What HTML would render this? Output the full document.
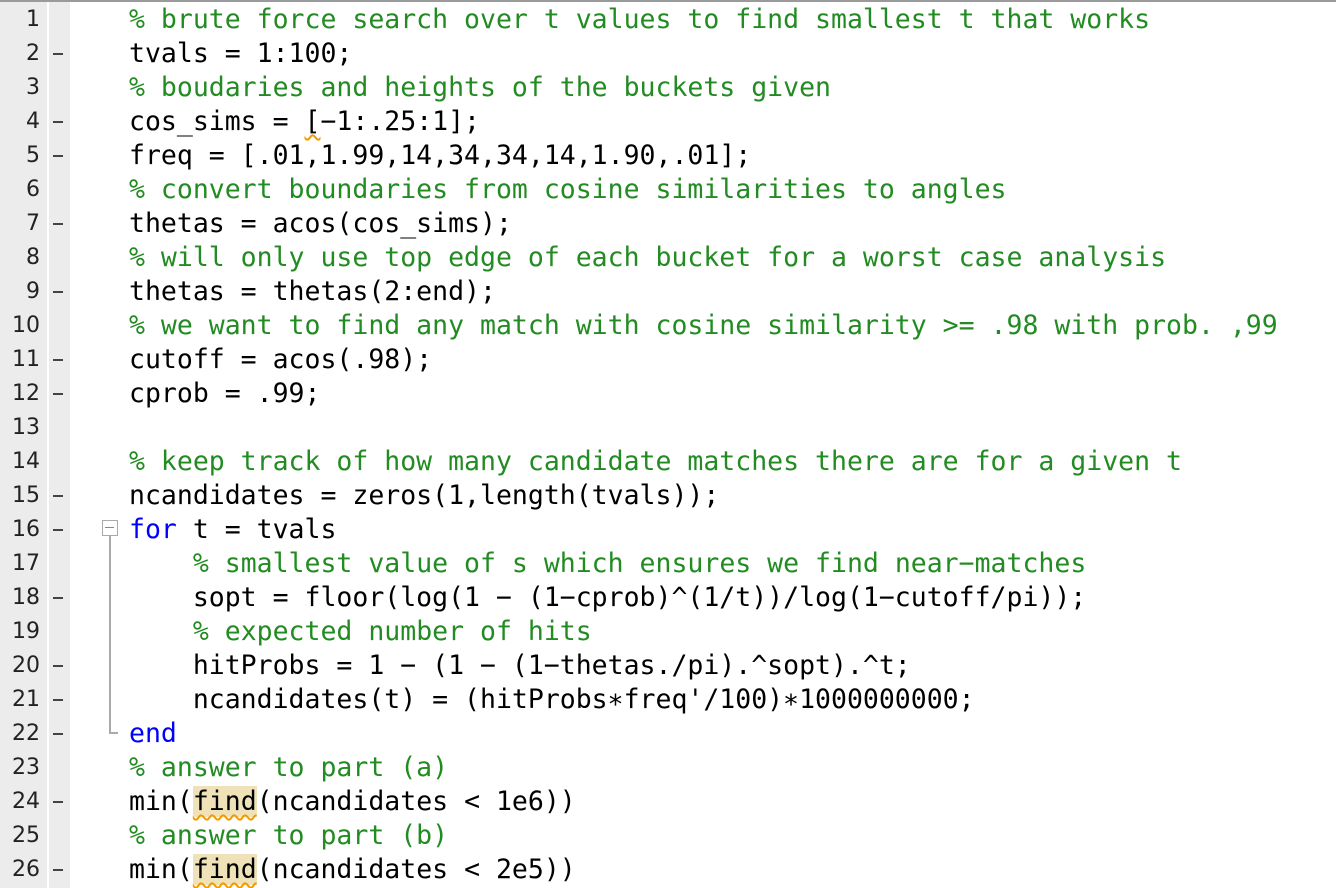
<!DOCTYPE html>
<html><head><style>
body{margin:0;width:1336px;height:888px;overflow:hidden;background:#fff;font-family:"DejaVu Sans Mono","Liberation Mono",monospace;}
.top{position:absolute;left:0;top:0;width:1336px;height:2px;background:#9a9a9a;}
.g1{position:absolute;left:0;top:2px;width:47px;height:886px;background:#ececec;}
.g2{position:absolute;left:49px;top:2px;width:21px;height:886px;background:#ececec;}
.ln{position:absolute;left:0;width:40px;text-align:right;font-size:22px;color:#222;height:34px;line-height:34px;font-family:"DejaVu Sans","Liberation Sans",sans-serif;}
.d{position:absolute;left:53px;width:10px;height:2px;background:#444;}
.c{position:absolute;left:129px;font-size:26.5px;line-height:34px;height:34px;white-space:pre;color:#000;}
.cm{color:#228b22}.kw{color:#0000ff}
.hl{background:#efe2b8;text-decoration:underline wavy #f29a00;text-decoration-thickness:2px;text-underline-offset:4px;}
.sq{text-decoration:underline wavy #f29a00;text-underline-offset:4px;text-decoration-thickness:2px;}
</style></head><body>
<div class="top"></div><div class="g1"></div><div class="g2"></div>
<div style="position:absolute;left:102px;top:520px;width:14px;height:14px;border:1px solid #aaa;background:#fff"></div>
<div style="position:absolute;left:105px;top:527px;width:9px;height:1px;background:#888"></div>
<div style="position:absolute;left:109px;top:536px;width:2px;height:198px;background:#aaa"></div>
<div style="position:absolute;left:109px;top:732px;width:9px;height:2px;background:#aaa"></div>
<div id="g"></div>
<script>
var L=[
['<span class="cm">% brute force search over t values to find smallest t that works</span>',0],
['tvals = 1:100;',1],
['<span class="cm">% boudaries and heights of the buckets given</span>',0],
['cos_sims = <span class="sq">[</span>−1:.25:1];',1],
['freq = [.01,1.99,14,34,34,14,1.90,.01];',1],
['<span class="cm">% convert boundaries from cosine similarities to angles</span>',0],
['thetas = acos(cos_sims);',1],
['<span class="cm">% will only use top edge of each bucket for a worst case analysis</span>',0],
['thetas = thetas(2:end);',1],
['<span class="cm">% we want to find any match with cosine similarity &gt;= .98 with prob. ,99</span>',0],
['cutoff = acos(.98);',1],
['cprob = .99;',1],
['',0],
['<span class="cm">% keep track of how many candidate matches there are for a given t</span>',0],
['ncandidates = zeros(1,length(tvals));',1],
['<span class="kw">for</span> t = tvals',1],
['    <span class="cm">% smallest value of s which ensures we find near−matches</span>',0],
['    sopt = floor(log(1 − (1−cprob)^(1/t))/log(1−cutoff/pi));',1],
['    <span class="cm">% expected number of hits</span>',0],
['    hitProbs = 1 − (1 − (1−thetas./pi).^sopt).^t;',1],
['    ncandidates(t) = (hitProbs∗freq\'/100)∗1000000000;',1],
['<span class="kw">end</span>',1],
['<span class="cm">% answer to part (a)</span>',0],
['min(<span class="hl">find</span>(ncandidates &lt; 1e6))',1],
['<span class="cm">% answer to part (b)</span>',0],
['min(<span class="hl">find</span>(ncandidates &lt; 2e5))',1]];
var h='';
for(var i=0;i<L.length;i++){var t=2+i*34;
h+='<div class="ln" style="top:'+(t+1)+'px">'+(i+1)+'</div>';
if(L[i][1])h+='<div class="d" style="top:'+(t+17)+'px"></div>';
h+='<div class="c" style="top:'+(t+1)+'px;z-index:'+(100-i)+'">'+L[i][0]+'</div>';}
document.getElementById('g').innerHTML=h;
</script>
</body></html>
